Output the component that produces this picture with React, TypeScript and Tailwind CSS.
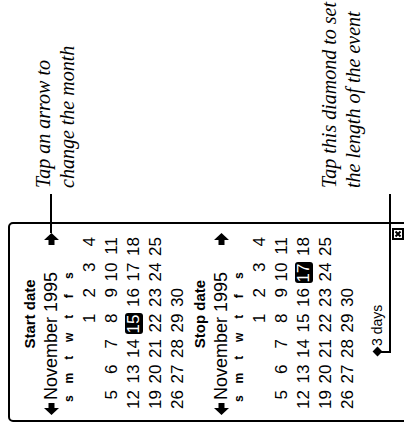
import React from 'react';

// Newton-style date slip, drawn upright and turned a quarter to the left,
// the way the manual page shows it.
const sans = "font-['Liberation_Sans',Arial,sans-serif]";
const serif = "font-['Liberation_Serif','Times_New_Roman',serif]";

const WEEKS: (number | null)[][] = [
  [null, null, null, 1, 2, 3, 4],
  [5, 6, 7, 8, 9, 10, 11],
  [12, 13, 14, 15, 16, 17, 18],
  [19, 20, 21, 22, 23, 24, 25],
  [26, 27, 28, 29, 30, null, null],
];

function Arrow({ dir }: { dir: 'left' | 'right' }) {
  return (
    <svg width="12" height="15" viewBox="0 0 12 15" aria-hidden className="block">
      <path
        fill="#000"
        d={dir === 'right' ? 'M0 4.5H5V0L12 7.5L5 15V10.5H0Z' : 'M12 4.5H7V0L0 7.5L7 15V10.5H12Z'}
      />
    </svg>
  );
}

function CloseBox() {
  return (
    <svg width="12" height="12" viewBox="0 0 12 12" aria-hidden className="block">
      <rect x="1" y="1" width="10" height="10" fill="#fff" stroke="#000" strokeWidth="2" />
      <path d="M3.5 3.5L8.5 8.5M8.5 3.5L3.5 8.5" stroke="#000" strokeWidth="2" />
    </svg>
  );
}

function Calendar({ title, selected, first }: { title: string; selected: number; first?: boolean }) {
  return (
    <section className={first ? 'pt-[9px]' : ''}>
      <h2 className="h-[22px] pl-[16px] text-center text-[15px] font-bold leading-[22px]">{title}</h2>
      <div className="flex h-[21px] items-center pl-[5px] pr-[9px]">
        <Arrow dir="left" />
        <span className="ml-[3px] text-[18px] leading-[21px]">November 1995</span>
        <span className="ml-auto">
          <Arrow dir="right" />
        </span>
      </div>
      <div className="grid h-[14px] grid-cols-[repeat(7,20.5px)] pl-[11px] text-[12px] font-bold leading-[14px]">
        {['s', 'm', 't', 'w', 't', 'f', 's'].map((d, i) => (
          <span key={i} className="text-center">
            {d}
          </span>
        ))}
      </div>
      <div className="mt-[3px] grid grid-cols-[repeat(7,25.5px)] pl-[4.5px] text-[17px] leading-[22px]">
        {WEEKS.flat().map((n, i) => (
          <span key={i} className="h-[22px] text-right">
            {n === selected ? (
              <span className="inline-block rounded-[3px] bg-black px-[1px] leading-[18px] text-white">{n}</span>
            ) : (
              n
            )}
          </span>
        ))}
      </div>
    </section>
  );
}

export default function App() {
  return (
    <div className="h-[429px] w-[404px] overflow-hidden bg-white text-black">
      <div className={`relative flex h-[404px] w-[429px] origin-top-left translate-y-[429px] -rotate-90 ${sans}`}>
        {/* the slip */}
        <div className="ml-[7px] mt-[8px] flex h-[420px] w-[200px] shrink-0 flex-col rounded-[5px] border-2 border-black">
          <Calendar title="Start date" selected={15} first />
          <Calendar title="Stop date" selected={17} />
          <div className="mt-[11px] flex h-[14px] items-center pl-[63px]">
            <span className="flex h-[10px] w-[10px] items-center justify-center">
              <span className="h-[7px] w-[7px] rotate-45 bg-black" />
            </span>
            <span className="ml-[1px] text-[14px] leading-[14px]">3 days</span>
          </div>
          <div className="mr-[4px] mt-[8px] self-end">
            <CloseBox />
          </div>
        </div>

        {/* callouts */}
        <div className={`ml-[34px] whitespace-nowrap pt-[31px] text-[20px] italic leading-[24px] ${serif}`}>
          <p>Tap an arrow to</p>
          <p>change the month</p>
          <p className="mt-[238px]">Tap this diamond to set</p>
          <p>the length of the event</p>
        </div>

        {/* leader lines */}
        <div className="absolute left-[196px] top-[50px] h-[2px] w-[39px] bg-black" />
        <div className="absolute left-[76px] top-[381px] h-[10px] w-[2px] bg-black" />
        <div className="absolute left-[76px] top-[389px] h-[2px] w-[159px] bg-black" />
      </div>
    </div>
  );
}
